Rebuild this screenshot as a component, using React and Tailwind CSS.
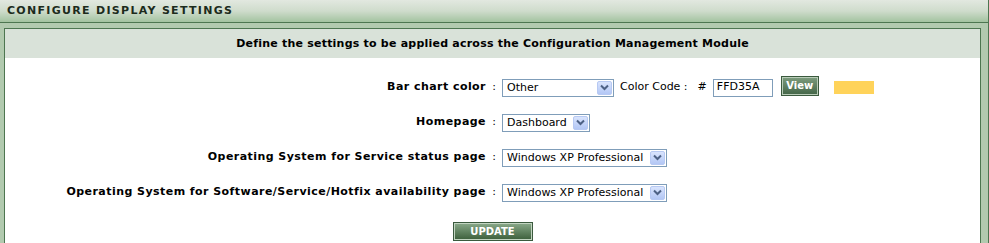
function Select({ value, width }) {
  return (
    <div className={`flex items-center h-[18px] border border-[#7f9db9] bg-white ${width}`}>
      <span className="flex-1 pl-[4px] text-[11px] leading-none text-black whitespace-nowrap overflow-hidden">{value}</span>
      <span className="w-[15px] h-[14px] mr-[1px] flex items-center justify-center rounded-[2px] border border-[#b7c9f3] bg-gradient-to-b from-[#d9e4fd] to-[#b3c7f5]">
        <svg width="9" height="7" viewBox="0 0 9 7">
          <path d="M1 1.5 L4.5 5 L8 1.5" fill="none" stroke="#4d6185" strokeWidth="2" />
        </svg>
      </span>
    </div>
  )
}

function Row({ label, children }) {
  return (
    <div className="flex items-center h-[35px]">
      <div className="w-[481px] text-right font-bold text-[11px] tracking-[0.45px] text-black whitespace-nowrap">{label}</div>
      <div className="w-[16px] text-center text-[11px]">:</div>
      {children}
    </div>
  )
}

export default function App() {
  return (
    <div
      className="w-[989px] h-[243px] overflow-hidden bg-[#b2caaf] border-r border-[#4d7650]"
      style={{ fontFamily: '"DejaVu Sans", Verdana, sans-serif' }}
    >
      <div className="h-[23px] border-b border-[#4d7650] bg-gradient-to-b from-[#e2e8e0] via-[#cfdccc] to-[#a3c3a0] flex items-center pl-[7px]">
        <span className="font-bold text-[11px] tracking-[1.3px] text-[#1c2b1c]">CONFIGURE DISPLAY SETTINGS</span>
      </div>
      <div className="pt-[5px] pl-[4px] pr-[7px]">
        <div className="border border-[#4d7650] bg-white h-[240px]">
          <div className="h-[29px] pt-[2px] bg-[#d9e2d9] flex items-center justify-center font-bold text-[11px] tracking-[0.22px] text-black">
            Define the settings to be applied across the Configuration Management Module
          </div>
          <div className="pt-[12px]">
            <Row label="Bar chart color">
              <Select value="Other" width="w-[112px]" />
              <span className="ml-[6px] text-[11px] text-black">Color Code :</span>
              <span className="ml-[10px] text-[11px] text-black">#</span>
              <div className="ml-[6px] w-[60px] h-[18px] border border-[#7f9db9] bg-white flex items-center pl-[3px] text-[11px] text-black">FFD35A</div>
              <button className="ml-[8px] -mt-[3px] h-[20px] w-[38px] border border-[#3b5a3e] bg-[#4f7252] flex items-center justify-center">
                <span className="w-full h-full border border-[#b9ccb8] bg-gradient-to-b from-[#7b9a7c] to-[#46684a] text-white font-bold text-[10px] leading-[16px]">View</span>
              </button>
              <div className="ml-[15px] w-[40px] h-[13px] bg-[#ffd35a]" />
            </Row>
            <Row label="Homepage">
              <Select value="Dashboard" width="w-[88px]" />
            </Row>
            <Row label="Operating System for Service status page">
              <Select value="Windows XP Professional" width="w-[165px]" />
            </Row>
            <Row label="Operating System for Software/Service/Hotfix availability page">
              <Select value="Windows XP Professional" width="w-[165px]" />
            </Row>
            <div className="flex justify-center mt-[12px]">
              <button className="w-[80px] h-[19px] border border-[#3b5a3e] bg-[#4f7252] flex">
                <span className="w-full h-full border border-[#c2d4c1] bg-gradient-to-b from-[#86a686] to-[#40633f] text-white font-bold text-[10px] leading-[15px]">UPDATE</span>
              </button>
            </div>
          </div>
        </div>
      </div>
    </div>
  )
}
